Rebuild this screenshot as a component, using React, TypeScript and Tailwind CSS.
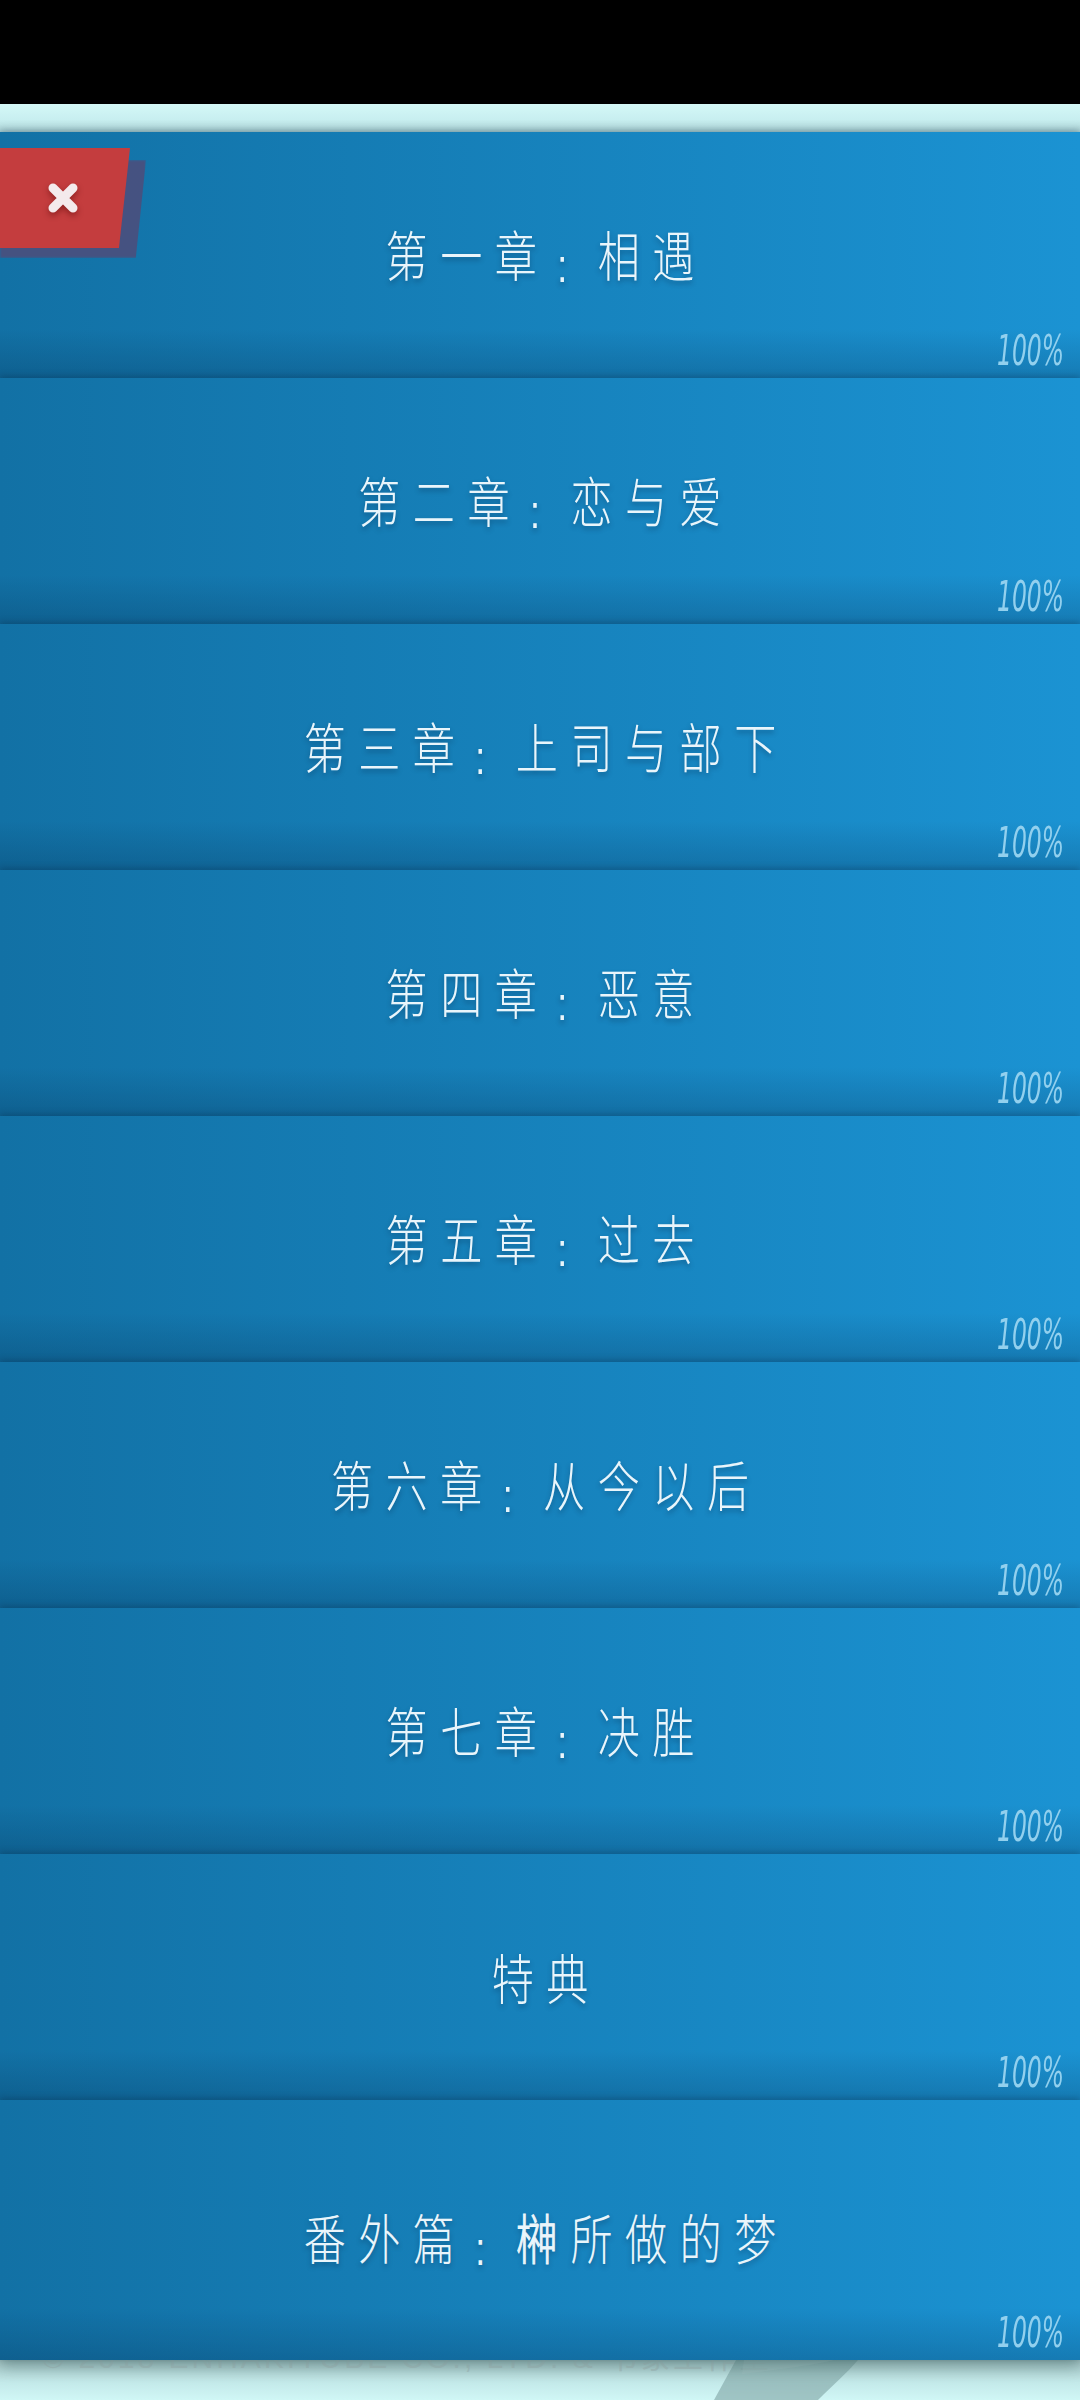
import React from "react";

const chapters = [
  "第一章",
  "第二章",
  "第三章",
  "第四章",
  "第五章",
  "第六章",
  "第七章",
];

const subtitles = ["相遇", "恋与爱", "上司与部下", "恶意", "过去", "从今以后", "决胜"];

function Spaced({ text }: { text: string }) {
  return (
    <>
      {Array.from(text).map((ch, i) => (
        <span key={i} className={ch === "榊" ? "[-webkit-text-stroke:1px_#eef7fc]" : ""}>
          {ch}
        </span>
      ))}
    </>
  );
}

// the colon takes a full cell, its dots sit low like a latin ':'
function Colon() {
  return (
    <span className="inline-block w-[1em] translate-y-[5px] pl-[0.22em] text-left text-[46px] tracking-[0px] font-['Liberation_Sans',sans-serif]">
      :
    </span>
  );
}

function ChapterRow({
  head,
  tail,
  tall,
  children,
}: {
  head: string;
  tail?: string;
  tall?: boolean;
  children?: React.ReactNode;
}) {
  return (
    <div
      className={`relative flex items-center justify-center ${
        tall ? "h-[260px]" : "h-[246px]"
      } bg-[linear-gradient(180deg,rgba(0,0,0,0)_80%,rgba(0,25,55,0.2)_100%),linear-gradient(90deg,#1271a5,#1b93d3)] shadow-[0_-2px_6px_rgba(0,30,60,0.25)]`}
    >
      <span
        className={`inline-block scale-x-[0.78] pl-[16px] text-[54px] font-light leading-none tracking-[16px] text-[#e9f5fb] [text-shadow:0_3px_6px_rgba(0,30,60,0.35)] font-['Noto_Sans_CJK_SC',sans-serif] ${
          tall ? "translate-y-[8px]" : ""
        }`}
      >
        <Spaced text={head} />
        {tail !== undefined && (
          <>
            <Colon />
            <span className="pl-[16px]">
              <Spaced text={tail} />
            </span>
          </>
        )}
      </span>
      <span className="absolute right-[16px] bottom-[6px] origin-right scale-x-[0.62] text-[42px] italic font-light leading-none text-[#92d0ee] font-['DejaVu_Sans_Condensed','DejaVu_Sans',sans-serif]">
        100%
      </span>
      {children}
    </div>
  );
}

function CloseButton() {
  return (
    <div className="absolute left-0 top-[16px] h-[110px] w-[150px]">
      <div className="absolute left-0 top-[12px] h-[98px] w-[146px] bg-[#4b4f7c]/90 blur-[1px] [clip-path:polygon(0_0,100%_0,93%_100%,0_100%)]" />
      <div className="absolute left-0 top-0 flex h-[100px] w-[130px] items-center justify-center bg-[#c43d3e] pr-[4px] [clip-path:polygon(0_0,100%_0,91.5%_100%,0_100%)]">
        <svg width="36" height="36" viewBox="0 0 36 36" className="drop-shadow-[0_3px_3px_rgba(80,0,0,0.45)]">
          <path d="M8 8 L28 28 M28 8 L8 28" stroke="#f4eaec" strokeWidth="9" strokeLinecap="round" fill="none" />
        </svg>
      </div>
    </div>
  );
}

export default function App() {
  return (
    <div className="flex h-[2400px] w-[1080px] flex-col overflow-hidden bg-[#cff6f5]">
      <div className="h-[104px] bg-black" />
      <div className="h-[28px] bg-[linear-gradient(180deg,#d4f8f7_0%,#c8eff0_55%,#aed5d8_100%)]" />

      <div className="relative z-10 flex flex-col shadow-[0_6px_14px_rgba(20,60,60,0.35)]">
        {chapters.map((c, i) => (
          <ChapterRow key={c} head={c} tail={subtitles[i]}>
            {i === 0 && <CloseButton />}
          </ChapterRow>
        ))}
        <ChapterRow head="特典" />
        <ChapterRow head="番外篇" tail="榊所做的梦" tall />
      </div>

      <div className="relative flex-1 bg-[linear-gradient(180deg,#a4c4c4_0%,#c3e9e9_55%,#d0f7f6_100%)]">
        <div className="absolute left-[42px] top-[-17px] whitespace-nowrap text-[30px] leading-none tracking-[3px] text-[#a9c4c4] font-['Liberation_Sans_Narrow','Liberation_Sans','Noto_Sans_CJK_SC',sans-serif]">
          © 2018 ENHAKITUBE CO., LTD. &amp; 书象工作室
        </div>
        <svg className="absolute left-[714px] top-0" width="150" height="40" viewBox="0 0 150 40">
          <path d="M22 0 L144 0 C132 14 120 24 104 40 L0 40 Z" fill="#7fa3a3" fillOpacity="0.6" />
          <path d="M30 0 L120 0 C95 6 60 10 28 14 Z" fill="#9dbcbc" fillOpacity="0.6" />
        </svg>
      </div>
    </div>
  );
}
